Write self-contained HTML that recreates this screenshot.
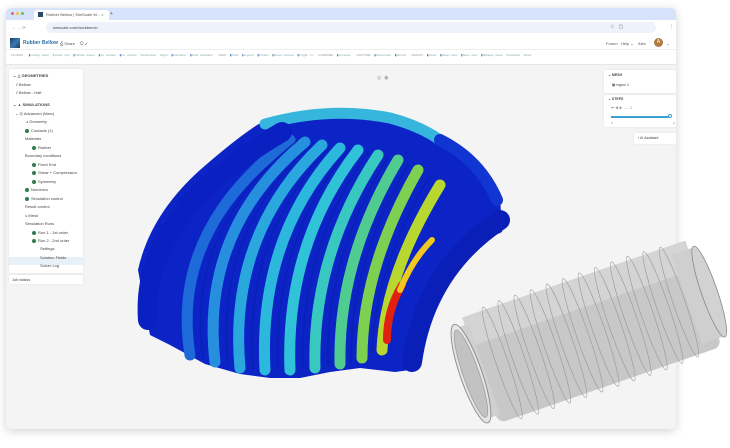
<!DOCTYPE html>
<html><head><meta charset="utf-8"><style>
*{margin:0;padding:0;box-sizing:border-box}
body{width:730px;height:448px;background:#fff;position:relative;overflow:hidden;font-family:"Liberation Sans",sans-serif;color:#333}
.win{position:absolute;left:6px;top:8px;width:670px;height:421px;background:#f4f4f4;border-radius:5px;box-shadow:0 2px 10px rgba(0,0,0,.18);overflow:hidden}
.abs{position:absolute}
.t{position:absolute;font-size:4px;white-space:nowrap;color:#555}
.card{position:absolute;background:#fff;border-radius:2px;box-shadow:0 0 2px rgba(0,0,0,.08)}
.row{position:absolute;font-size:4px;white-space:nowrap;color:#444}
.dot{display:inline-block;width:4px;height:4px;border-radius:50%;background:#2e7d4f;vertical-align:middle;margin-right:2px}
</style></head><body>
<div class="win">
  <div class="abs" style="left:0;top:0;width:670px;height:12px;background:#d6e3fb"></div>
  <div class="abs" style="left:5px;top:4px;width:3px;height:3px;border-radius:50%;background:#ed6a5e"></div>
  <div class="abs" style="left:10px;top:4px;width:3px;height:3px;border-radius:50%;background:#f5bf4f"></div>
  <div class="abs" style="left:15px;top:4px;width:3px;height:3px;border-radius:50%;background:#61c554"></div>
  <div class="abs" style="left:28px;top:2px;width:75px;height:10px;background:#fff;border-radius:3px 3px 0 0"></div>
  <div class="abs" style="left:32px;top:4px;width:5px;height:5px;background:#2a4a6a"></div>
  <span class="t" style="left:40px;top:4px">Rubber Bellow | SimScale W... ×</span>
  <span class="t" style="left:104px;top:3px;font-size:5px">+</span>
  <div class="abs" style="left:0;top:12px;width:670px;height:15px;background:#fff"></div>
  <span class="t" style="left:6px;top:17px;color:#888">←  →  ⟳</span>
  <div class="abs" style="left:40px;top:14px;width:610px;height:11px;background:#eef3fb;border-radius:6px"></div>
  <span class="t" style="left:47px;top:17px;color:#444">simscale.com/workbench</span>
  <span class="t" style="left:604px;top:16px;font-size:5px;color:#666">☆ &nbsp;&nbsp;▢</span>
  <span class="t" style="left:663px;top:16px;font-size:5px">⋮</span>
  <div class="abs" style="left:0;top:27px;width:670px;height:15px;background:#fff;border-bottom:1px solid #eee"></div>
  <div class="abs" style="left:4px;top:30px;width:10px;height:10px;background:linear-gradient(135deg,#1b3b5e,#3f7ab0 50%,#1b3b5e)"></div>
  <span class="t" style="left:17px;top:32px;font-size:5px;color:#2f6ea5;font-weight:bold">Rubber Bellow</span>
  <span class="t" style="left:54px;top:33px">⎙ Share &nbsp;&nbsp; ⟲ ✓</span>
  <span class="t" style="left:600px;top:33px">Forum &nbsp;&nbsp;Help ⌄ &nbsp;&nbsp;&nbsp;Alex</span>
  <div class="abs" style="left:648px;top:30px;width:9px;height:9px;border-radius:50%;background:#b07a3e;color:#fff;font-size:5px;text-align:center;line-height:9px">A</div>
  <span class="t" style="left:660px;top:33px">⌄</span>
  <div class="abs" style="left:0;top:42px;width:670px;height:15px;background:#fff;border-bottom:1px solid #e6e6e6"></div>
  <div class="t" style="left:5px;top:44px;font-size:3px;color:#8aa;line-height:6px;word-spacing:1px">
  <span style="color:#999">FILTERS</span> &nbsp;&nbsp;<span style="color:#4a7fb5">▮</span>Cutting plane &nbsp;<span style="color:#bbb">▮</span>Vertex plot &nbsp;<span style="color:#4a7fb5">▮</span>Particle traces &nbsp;<span style="color:#4a7fb5">▮</span>Iso surface &nbsp;<span style="color:#4a7fb5">▮</span>Iso volume &nbsp;Streamlines &nbsp;Glyph &nbsp;<span style="color:#4a7fb5">▮</span>Animation &nbsp;<span style="color:#4a7fb5">▮</span>Field calculator &nbsp;&nbsp;<span style="color:#999">VIEW</span> &nbsp;<span style="color:#4a7fb5">▮</span>Parts &nbsp;<span style="color:#4a7fb5">▮</span>Legend &nbsp;<span style="color:#4a7fb5">▮</span>Probes &nbsp;<span style="color:#4a7fb5">▮</span>Reset camera &nbsp;<span style="color:#4a7fb5">▮</span>Toggle UI &nbsp;&nbsp;<span style="color:#999">COMPARE</span> &nbsp;<span style="color:#4a7fb5">▮</span>Compare &nbsp;&nbsp;<span style="color:#999">CAPTURE</span> &nbsp;<span style="color:#4a7fb5">▮</span>Screenshot &nbsp;<span style="color:#4a7fb5">▮</span>Record &nbsp;&nbsp;<span style="color:#999">RESULT</span> &nbsp;<span style="color:#4a7fb5">▮</span>Reset &nbsp;<span style="color:#4a7fb5">▮</span>Reset view &nbsp;<span style="color:#4a7fb5">▮</span>Save view &nbsp;<span style="color:#4a7fb5">▮</span>Manage views &nbsp;Download &nbsp;Share</div>

  <div class="card" style="left:3px;top:61px;width:74px;height:204px"></div>
  <div class="abs" style="left:3px;top:249px;width:74px;height:8px;background:#e8f0f8"></div>
  <span class="row" style="left:7px;top:65px;font-weight:bold">⌄ △ GEOMETRIES</span>
  <span class="row" style="left:10px;top:74px">⫽ Bellow</span>
  <span class="row" style="left:10px;top:82px">⫽ Bellow - Half</span>
  <span class="row" style="left:7px;top:94px;font-weight:bold">⌄ <span style="color:#2e7d4f">▲</span> SIMULATIONS</span>
  <span class="row" style="left:9px;top:103px">⌄ ◎ Advanced (Marc)</span>
  <span class="row" style="left:20px;top:111px">⩚ Geometry</span>
  <span class="row" style="left:19px;top:120px"><span class="dot"></span>Contacts (1)</span>
  <span class="row" style="left:19px;top:128px">Materials</span>
  <span class="row" style="left:26px;top:137px"><span class="dot"></span>Rubber</span>
  <span class="row" style="left:19px;top:145px">Boundary conditions</span>
  <span class="row" style="left:26px;top:154px"><span class="dot"></span>Fixed End</span>
  <span class="row" style="left:26px;top:162px"><span class="dot"></span>Shear + Compression</span>
  <span class="row" style="left:26px;top:171px"><span class="dot"></span>Symmetry</span>
  <span class="row" style="left:19px;top:179px"><span class="dot"></span>Numerics</span>
  <span class="row" style="left:19px;top:188px"><span class="dot"></span>Simulation control</span>
  <span class="row" style="left:19px;top:196px">Result control</span>
  <span class="row" style="left:19px;top:205px">⩚ Mesh</span>
  <span class="row" style="left:19px;top:213px">Simulation Runs</span>
  <span class="row" style="left:26px;top:222px"><span class="dot"></span>Run 1 - 1st order</span>
  <span class="row" style="left:26px;top:230px"><span class="dot"></span>Run 2 - 2nd order</span>
  <span class="row" style="left:34px;top:238px">Settings</span>
  <span class="row" style="left:34px;top:247px">Solution Fields</span>
  <span class="row" style="left:34px;top:255px">Solver Log</span>
  <div class="card" style="left:3px;top:267px;width:74px;height:9px"></div>
  <span class="row" style="left:6px;top:269px">Job status</span>

  <div class="card" style="left:598px;top:62px;width:72px;height:23px"></div>
  <span class="row" style="left:602px;top:65px;font-weight:bold;font-size:3.5px">⌄ MESH</span>
  <span class="row" style="left:606px;top:75px;font-size:3.5px">▦ region 1</span>
  <div class="card" style="left:598px;top:87px;width:72px;height:32px"></div>
  <span class="row" style="left:602px;top:89px;font-weight:bold;font-size:3.5px">⌄ STEPS</span>
  <span class="row" style="left:605px;top:98px;font-size:3.5px;color:#888">⏮ ◀ ▶ &nbsp;— &nbsp;2</span>
  <div class="abs" style="left:605px;top:108px;width:59px;height:1.5px;background:#3aa0d0"></div>
  <div class="abs" style="left:662px;top:106px;width:4px;height:4px;border-radius:50%;background:#fff;border:1px solid #3aa0d0"></div>
  <span class="row" style="left:605px;top:113px;font-size:3px;color:#888">0</span>
  <span class="row" style="left:667px;top:113px;font-size:3px;color:#888">2</span>
  <div class="card" style="left:628px;top:125px;width:42px;height:11px"></div>
  <span class="row" style="left:632px;top:128px;font-size:3.5px">▪ AI Assistant</span>
  <span class="t" style="left:371px;top:67px;color:#999;font-size:5px">◎ &nbsp;◉</span>
</div>

<svg class="abs" style="left:0;top:0" width="730" height="448" viewBox="0 0 730 448">
 <g fill="none" stroke-linecap="round">
  <path d="M150,335 L138,270 Q150,215 200,170 Q240,135 262,122 Q300,108 340,110 Q400,115 440,135 Q480,155 500,195 L502,232 Q460,250 435,290 Q418,325 410,370 L395,372 L360,368 L330,372 L300,378 L270,378 L240,374 L205,364 L170,345 Z" fill="#0c24c6" stroke="none"/>
  <path d="M265,124 Q330,106 390,118 Q420,126 440,140" stroke="#36b6dc" stroke-width="11"/>
  <g stroke-width="11">
   <path d="M190,355 Q170,230 290,140" stroke="#1d6ad8"/>
   <path d="M215,362 Q200,230 305,142" stroke="#2690de"/>
   <path d="M240,368 Q228,235 322,145" stroke="#2aa8de"/>
   <path d="M265,370 Q258,238 340,148" stroke="#2cb8dc"/>
   <path d="M290,370 Q285,245 358,150" stroke="#30c2d6"/>
   <path d="M315,368 Q312,255 378,155" stroke="#38c8c0"/>
   <path d="M340,364 Q338,260 398,160" stroke="#50cc90"/>
   <path d="M362,358 Q362,268 418,170" stroke="#7ed050"/>
   <path d="M382,350 Q385,275 440,185" stroke="#b8d830"/>
  </g>
  <g stroke="#0a1eb0" stroke-width="1.5" opacity="0.7">
   <path d="M203,358 Q185,230 297,141"/>
   <path d="M228,365 Q214,232 313,143"/>
   <path d="M253,369 Q243,236 331,146"/>
   <path d="M278,370 Q272,241 349,149"/>
   <path d="M303,369 Q299,250 368,152"/>
   <path d="M328,366 Q325,257 388,157"/>
   <path d="M351,361 Q350,264 408,165"/>
   <path d="M372,354 Q374,271 429,177"/>
  </g>
  <path d="M387,340 Q387,310 402,285" stroke="#e02010" stroke-width="8"/>
  <path d="M400,290 Q412,260 432,240" stroke="#f0c820" stroke-width="6"/>
  <path d="M148,320 Q140,215 282,132" stroke="#0a20c0" stroke-width="20"/>
  <path d="M412,362 Q425,270 500,220" stroke="#0a1fb8" stroke-width="20"/>
  <path d="M440,140 Q480,160 497,200" stroke="#1035d0" stroke-width="12"/>
 </g>

 <g transform="translate(592,332) rotate(-19)">
  <rect x="-118" y="-56" width="236" height="112" rx="8" fill="#c8c8c8"/>
  <rect x="-118" y="-56" width="236" height="30" fill="#d4d4d4"/>
  <g fill="none" stroke="#9c9c9c" stroke-width="0.7">
   <ellipse cx="-95" cy="0" rx="6" ry="59"/>
   <ellipse cx="-78" cy="0" rx="6" ry="60"/>
   <ellipse cx="-61" cy="0" rx="6" ry="60"/>
   <ellipse cx="-44" cy="0" rx="6" ry="60"/>
   <ellipse cx="-27" cy="0" rx="6" ry="60"/>
   <ellipse cx="-10" cy="0" rx="6" ry="60"/>
   <ellipse cx="7" cy="0" rx="6" ry="60"/>
   <ellipse cx="24" cy="0" rx="6" ry="60"/>
   <ellipse cx="41" cy="0" rx="6" ry="60"/>
   <ellipse cx="58" cy="0" rx="6" ry="60"/>
   <ellipse cx="75" cy="0" rx="6" ry="59"/>
   <ellipse cx="92" cy="0" rx="6" ry="58"/>
  </g>
  <rect x="100" y="-47" width="24" height="94" fill="#cfcfcf"/>
  <ellipse cx="124" cy="0" rx="8" ry="48" fill="#d2d2d2" stroke="#888" stroke-width="0.8"/>
  <rect x="-128" y="-48" width="14" height="96" fill="#d0d0d0"/>
  <ellipse cx="-128" cy="0" rx="11" ry="52" fill="#e4e4e4" stroke="#888" stroke-width="0.9"/>
  <ellipse cx="-128" cy="0" rx="8" ry="46" fill="#c2c2c2" stroke="#999" stroke-width="0.7"/>
 </g>
</svg>
</body></html>
